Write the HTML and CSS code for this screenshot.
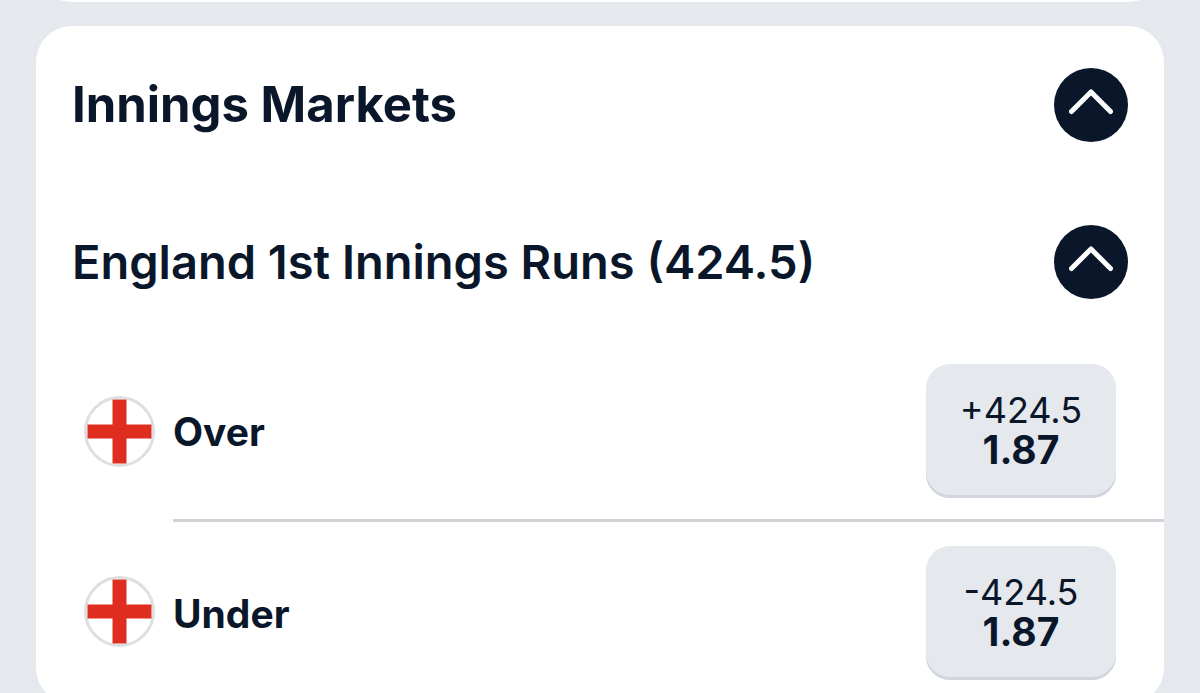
FILE: index.html
```html
<!DOCTYPE html>
<html lang="en">
<head>
<meta charset="utf-8">
<meta name="viewport" content="width=device-width, initial-scale=1">
<title>Innings Markets</title>
<link rel="stylesheet" href="styles.css">
</head>
<body>
<main class="page">
  <div class="card card-previous"></div>
  <section class="card card-markets">
    <header class="section-header">
      <h1 class="section-title">Innings Markets</h1>
      <button class="toggle" type="button" aria-label="Collapse Innings Markets" aria-expanded="true">
        <svg class="chevron" viewBox="0 0 44 26" aria-hidden="true"><path d="M2.5 22.500 22 3 41.500 22.500"/></svg>
      </button>
    </header>
    <header class="section-header">
      <h2 class="market-title">England 1st Innings Runs (424.5)</h2>
      <button class="toggle" type="button" aria-label="Collapse England 1st Innings Runs" aria-expanded="true">
        <svg class="chevron" viewBox="0 0 44 26" aria-hidden="true"><path d="M2.5 22.500 22 3 41.500 22.500"/></svg>
      </button>
    </header>
    <ul class="selections">
      <li class="selection">
        <svg class="flag" viewBox="0 0 71 71" aria-hidden="true"><circle class="flag-base" cx="35.5" cy="35.5" r="34"/><path class="flag-cross" d="M28.500 3.500H42.500V28.500H67.500V42.500H42.500V67.500H28.500V42.500H3.500V28.500H28.500Z"/></svg>
        <div class="selection-body">
          <span class="selection-name">Over</span>
          <button class="odds" type="button"><span class="line">+424.5</span><span class="price">1.87</span></button>
        </div>
      </li>
      <li class="selection">
        <svg class="flag" viewBox="0 0 71 71" aria-hidden="true"><circle class="flag-base" cx="35.5" cy="35.5" r="34"/><path class="flag-cross" d="M28.500 3.500H42.500V28.500H67.500V42.500H42.500V67.500H28.500V42.500H3.500V28.500H28.500Z"/></svg>
        <div class="selection-body">
          <span class="selection-name">Under</span>
          <button class="odds" type="button"><span class="line">-424.5</span><span class="price">1.87</span></button>
        </div>
      </li>
    </ul>
  </section>
</main>
</body>
</html>
```
FILE: styles.css
```css
* { box-sizing: border-box; }
body {
  margin: 0;
  background: #e5e8ed;
  color: #0a1629;
  font-family: Inter, "Liberation Sans", sans-serif;
}
.page {
  display: flex;
  flex-direction: column;
  gap: 24px;
  height: 100vh;
  padding: 0 36px;
  overflow: hidden;
}
.card {
  flex-shrink: 0;
  background: #fff;
  border-radius: 36px;
}
.card-previous {
  height: 72px;
  margin-top: -70px;
}
.card-markets { padding-bottom: 3px; }
.section-header {
  display: flex;
  align-items: center;
  justify-content: space-between;
  min-height: 157px;
  padding: 0 36px;
}
.section-title, .market-title {
  margin: 0;
  line-height: 60px;
}
.section-title { font-size: 49px; font-weight: 700; }
.market-title { font-size: 47px; font-weight: 600; }
.toggle {
  display: flex;
  align-items: center;
  justify-content: center;
  width: 74px;
  height: 74px;
  padding: 0 0 6px;
  border: 0;
  border-radius: 50%;
  background: #0a1629;
}
.chevron {
  width: 44px;
  height: 26px;
  fill: none;
  stroke: #fff;
  stroke-width: 5;
  stroke-linecap: round;
  stroke-linejoin: round;
}
.selections {
  margin: 0;
  padding: 0 0 0 48px;
  list-style: none;
}
.selection {
  display: flex;
  align-items: center;
  gap: 18px;
}
.flag { width: 71px; height: 71px; }
.flag-base { fill: #fff; stroke: #dedfe1; stroke-width: 3; }
.flag-cross { fill: #df2e20; }
.selection-body {
  display: flex;
  flex: 1;
  align-items: center;
  justify-content: space-between;
  padding: 24px 48px 21px 0;
  border-bottom: 3px solid #d0d3d7;
}
.selection:last-child .selection-body { border-bottom: 0; }
.selection-name, .price {
  font-size: 39px;
  font-weight: 700;
}
.odds {
  display: flex;
  flex-direction: column;
  align-items: center;
  justify-content: center;
  width: 190px;
  height: 134px;
  padding: 0 0 3px;
  border: 0;
  border-radius: 24px;
  background: #e5e8ed;
  box-shadow: inset 0 -3px 0 #d0d5de;
  color: inherit;
  font-family: inherit;
  font-size: 36px;
  line-height: 39px;
}
```
